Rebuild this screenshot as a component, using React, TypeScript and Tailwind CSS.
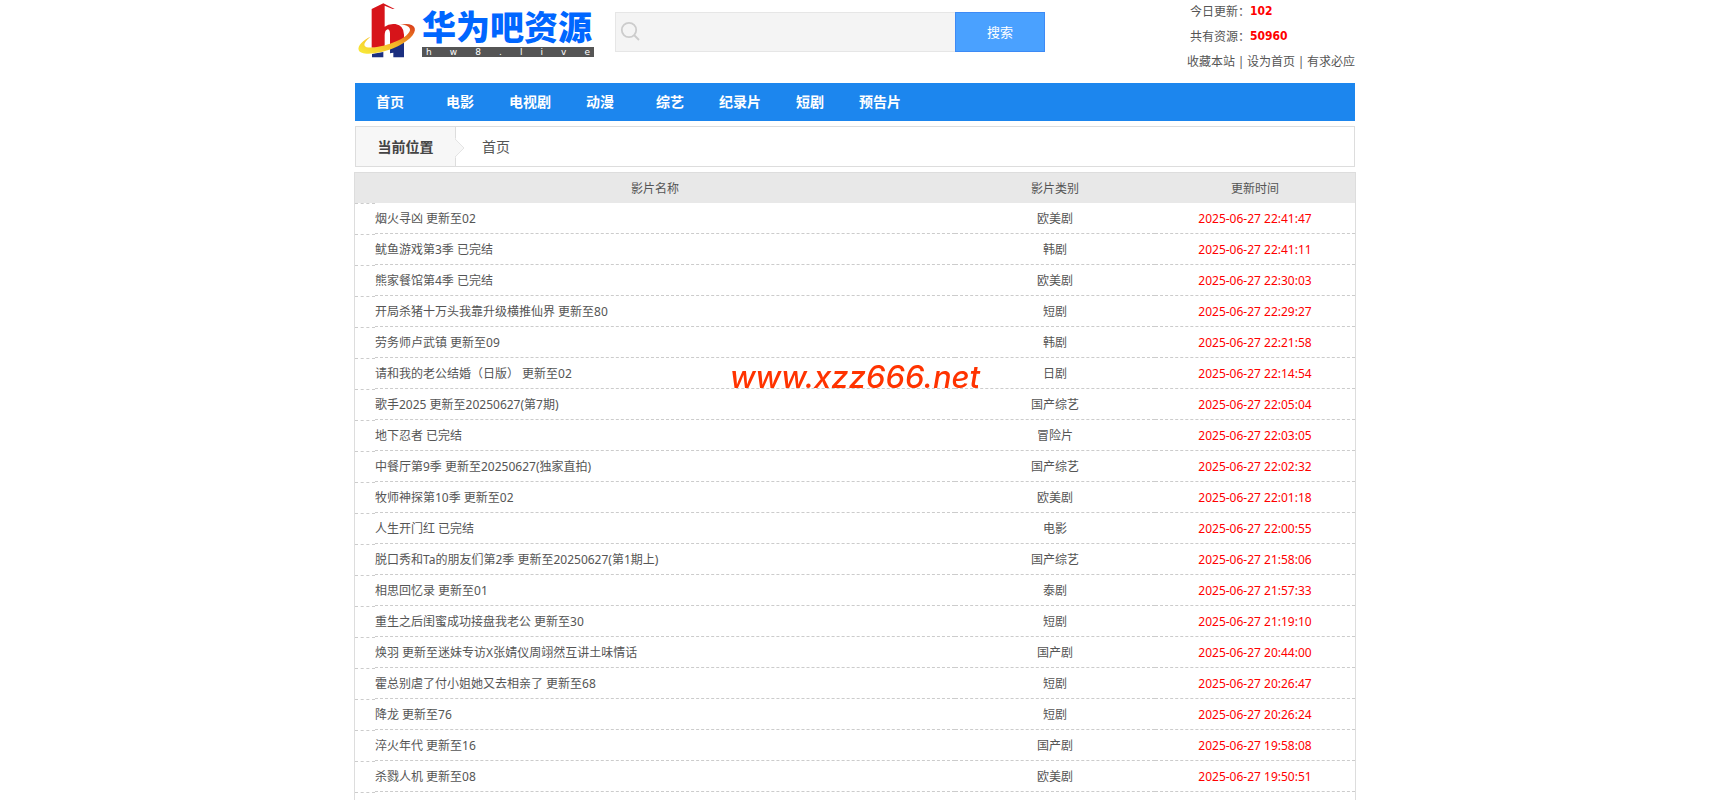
import { useState } from 'react';

interface Video {
  title: string;
  category: string;
  updatedAt: string;
}

const NAV_ITEMS = ['首页', '电影', '电视剧', '动漫', '综艺', '纪录片', '短剧', '预告片'];

const VIDEOS: Video[] = [
  { title: '烟火寻凶 更新至02', category: '欧美剧', updatedAt: '2025-06-27 22:41:47' },
  { title: '鱿鱼游戏第3季 已完结', category: '韩剧', updatedAt: '2025-06-27 22:41:11' },
  { title: '熊家餐馆第4季 已完结', category: '欧美剧', updatedAt: '2025-06-27 22:30:03' },
  { title: '开局杀猪十万头我靠升级横推仙界 更新至80', category: '短剧', updatedAt: '2025-06-27 22:29:27' },
  { title: '劳务师卢武镇 更新至09', category: '韩剧', updatedAt: '2025-06-27 22:21:58' },
  { title: '请和我的老公结婚（日版） 更新至02', category: '日剧', updatedAt: '2025-06-27 22:14:54' },
  { title: '歌手2025 更新至20250627(第7期)', category: '国产综艺', updatedAt: '2025-06-27 22:05:04' },
  { title: '地下忍者 已完结', category: '冒险片', updatedAt: '2025-06-27 22:03:05' },
  { title: '中餐厅第9季 更新至20250627(独家直拍)', category: '国产综艺', updatedAt: '2025-06-27 22:02:32' },
  { title: '牧师神探第10季 更新至02', category: '欧美剧', updatedAt: '2025-06-27 22:01:18' },
  { title: '人生开门红 已完结', category: '电影', updatedAt: '2025-06-27 22:00:55' },
  { title: '脱口秀和Ta的朋友们第2季 更新至20250627(第1期上)', category: '国产综艺', updatedAt: '2025-06-27 21:58:06' },
  { title: '相思回忆录 更新至01', category: '泰剧', updatedAt: '2025-06-27 21:57:33' },
  { title: '重生之后闺蜜成功接盘我老公 更新至30', category: '短剧', updatedAt: '2025-06-27 21:19:10' },
  { title: '焕羽 更新至迷妹专访X张婧仪周翊然互讲土味情话', category: '国产剧', updatedAt: '2025-06-27 20:44:00' },
  { title: '霍总别虐了付小姐她又去相亲了 更新至68', category: '短剧', updatedAt: '2025-06-27 20:26:47' },
  { title: '降龙 更新至76', category: '短剧', updatedAt: '2025-06-27 20:26:24' },
  { title: '淬火年代 更新至16', category: '国产剧', updatedAt: '2025-06-27 19:58:08' },
  { title: '杀戮人机 更新至08', category: '欧美剧', updatedAt: '2025-06-27 19:50:51' },
];

function LogoMark() {
  return (
    <svg viewBox="3 0 198 186" className="h-[62px] w-[66px] shrink-0" aria-hidden="true">
      <defs>
        <linearGradient id="ring" x1="0" y1="1" x2="1" y2="0">
          <stop offset="0" stopColor="#f8ee3a" />
          <stop offset="0.5" stopColor="#f5b526" />
          <stop offset="1" stopColor="#d8321a" />
        </linearGradient>
      </defs>
      <path d="M54 162 L88 156 V172 H54 Z M108 146 L150 126 V172 H118 V158 L108 160 Z" fill="#1b2f80" />
      <path d="M53 27 L88 10 L122 27 H116 L92 17 V80 Q104 70 124 72 Q150 76 150 104 V118 Q136 130 108 138 V100 Q107 88 101 88 Q92 90 92 106 V140 Q72 145 53 143 Z" fill="#d7141a" />
      <path
        d="M50 110 C26 120 10 138 14 150 C20 168 72 163 118 145 C160 127 188 102 182 84 C177 72 160 69 138 74 C158 74 169 80 168 91 C165 105 140 121 108 131 C72 143 36 147 32 137 C29 130 37 120 50 110 Z"
        fill="url(#ring)"
      />
    </svg>
  );
}

function Logo() {
  return (
    <a href="#" className="flex w-[245px] shrink-0 items-start">
      <LogoMark />
      <span className="ml-px block w-[172px] pt-2">
        <span className="block whitespace-nowrap font-['Noto_Sans_CJK_SC',sans-serif] text-[34px] leading-[36px] font-black text-[#0066ff]">
          华为吧资源
        </span>
        <span className="mt-[3px] flex h-[10px] items-center justify-between bg-[#555] px-1 font-['DejaVu_Sans',sans-serif] text-[9px] leading-[10px] text-white">
          {[...'hw8.live'].map((c, i) => (
            <span key={i}>{c}</span>
          ))}
        </span>
      </span>
    </a>
  );
}

function SearchBox() {
  const [keyword, setKeyword] = useState('');

  return (
    <form className="ml-[15px] flex h-10 w-[430px]" onSubmit={e => e.preventDefault()}>
      <label className="flex min-w-0 flex-1 items-start border border-r-0 border-[#e6e6e6] bg-[#f4f4f4] pl-1">
        <svg viewBox="0 0 20 20" className="mt-2 size-5 shrink-0" fill="none" stroke="#ccc" strokeWidth="1.8" aria-hidden="true">
          <circle cx="9" cy="9" r="7.2" />
          <path d="M14 14 L19 19" />
        </svg>
        <input
          type="text"
          aria-label="搜索"
          value={keyword}
          onChange={e => setKeyword(e.target.value)}
          className="h-full min-w-0 flex-1 bg-transparent px-2 text-sm focus:outline-none"
        />
      </label>
      <button type="submit" className="w-[90px] border border-[#3d8af5] bg-[#4aa1ff] pt-0.5 text-[13px] text-white">
        搜索
      </button>
    </form>
  );
}

function Header() {
  return (
    <header className="flex h-[83px] items-start">
      <Logo />
      <div className="pt-3">
        <SearchBox />
      </div>
      <div className="-mt-px ml-auto leading-[25px] whitespace-nowrap">
        <p className="flex h-[25px] pl-[3px]">
          今日更新：<b className="font-['DejaVu_Sans_Condensed',sans-serif] text-[#f00]">102</b>
        </p>
        <p className="flex h-[25px] pl-[3px]">
          共有资源：<b className="font-['DejaVu_Sans_Condensed',sans-serif] text-[#f00]">50960</b>
        </p>
        <p className="flex h-[25px]">
          <a href="#">收藏本站</a>
          <span className="w-3 text-center">|</span>
          <a href="#">设为首页</a>
          <span className="w-3 text-center">|</span>
          <a href="#">有求必应</a>
        </p>
      </div>
    </header>
  );
}

function Breadcrumb() {
  return (
    <div className="mt-[5px] flex h-[41px] border border-[#ddd] text-sm">
      <div className="relative flex w-[100px] items-center justify-center border-r border-[#ddd] bg-[#f7f7f7] font-bold text-[#444]">
        当前位置
        <svg viewBox="0 0 10 20" className="absolute top-[11px] -right-[10px] h-5 w-[10px]" aria-hidden="true">
          <path d="M0 0 L9 10 L0 20 Z" fill="#f7f7f7" />
          <path d="M0 1 L9 10 L0 19" fill="none" stroke="#e4e4e4" />
        </svg>
      </div>
      <a href="#" className="flex items-center pl-[26px]">首页</a>
    </div>
  );
}

function VideoTable() {
  return (
    <table className="-mx-px mt-[5px] w-[calc(100%+2px)] table-fixed border-separate border-spacing-0 border border-b-0 border-[#ddd]">
      <colgroup>
        <col className="w-[2%]" />
        <col className="w-[58%]" />
        <col className="w-[20%]" />
        <col className="w-[20%]" />
      </colgroup>
      <thead>
        <tr className="h-[30px] bg-[#e8e8e8]">
          <th colSpan={2} className="p-0 pt-0.5 font-normal">影片名称</th>
          <th className="p-0 pt-0.5 font-normal">影片类别</th>
          <th className="p-0 pt-0.5 font-normal">更新时间</th>
        </tr>
      </thead>
      <tbody>
        {VIDEOS.map(v => (
          <tr key={v.title} className="h-[31px]">
            <td className="border-t border-dashed border-[#ccc] p-0" />
            <td className="border-b border-dashed border-[#ccc] p-0 pt-0.5">
              <a href="#" className="hover:text-red-500">{v.title}</a>
            </td>
            <td className="border-b border-dashed border-[#ccc] p-0 pt-0.5 text-center">{v.category}</td>
            <td className="border-b border-dashed border-[#ccc] p-0 pt-0.5 text-center text-[#f00]">{v.updatedAt}</td>
          </tr>
        ))}
        <tr className="h-2">
          <td className="border-t border-dashed border-[#ccc] p-0" />
          <td colSpan={3} className="p-0" />
        </tr>
      </tbody>
    </table>
  );
}

export default function App() {
  return (
    <div className="bg-white font-['Noto_Sans','Noto_Sans_CJK_SC',sans-serif] text-xs text-[#555]">
      <div className="mx-auto max-w-[1000px]">
        <Header />
        <nav className="flex h-[38px] items-center bg-[#1c86ee] text-sm font-bold text-white">
          {NAV_ITEMS.map(item => (
            <a key={item} href="#" className="w-[70px] text-center">{item}</a>
          ))}
        </nav>
        <Breadcrumb />
        <VideoTable />
      </div>
      <div className="pointer-events-none fixed inset-x-0 top-[355px] text-center font-['Inter',sans-serif] text-[31px] leading-[44px] font-medium text-[#ff3300] italic">
        www.xzz666.net
      </div>
    </div>
  );
}
